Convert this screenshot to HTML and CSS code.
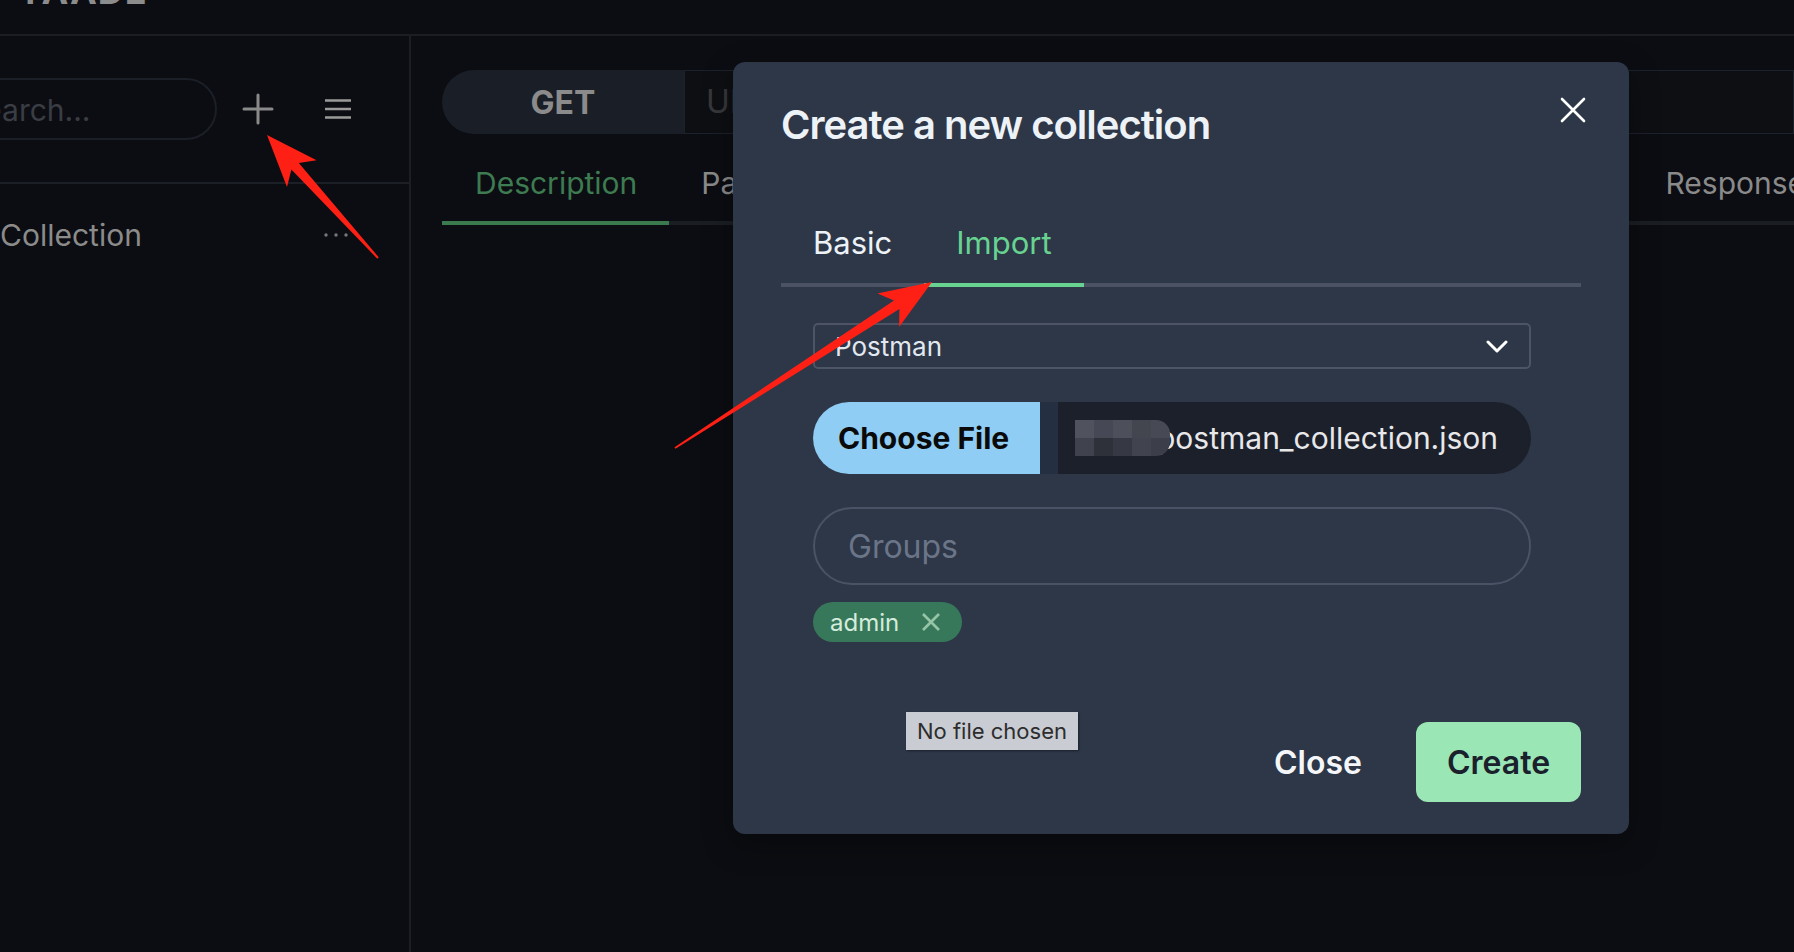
FILE: index.html
```html
<!DOCTYPE html>
<html lang="en">
<head>
    <meta charset="UTF-8">
    <meta name="viewport" content="width=device-width, initial-scale=1.0">
    <title>Yaade</title>
    <link rel="stylesheet" href="styles.css">
</head>
<body>

    <header class="topbar">
        <div class="logo">YAADE</div>
    </header>

    <div class="workspace">
        <aside class="sidebar">
            <div class="sidebar-tools">
                <div class="search">Search...</div>
                <button class="icon-btn plus-btn">
                    <svg width="32" height="32" viewBox="0 0 32 32"><path d="M16 2v28M2 16h28" stroke="currentColor" stroke-width="3" stroke-linecap="round"/></svg>
                </button>
                <button class="icon-btn menu-btn">
                    <svg width="28" height="20" viewBox="0 0 28 20"><path d="M1 1.5h26M1 10h26M1 18.5h26" stroke="currentColor" stroke-width="2.6"/></svg>
                </button>
            </div>
            <div class="collection-item">
                <span class="collection-name">Collection</span>
                <svg class="dots" width="26" height="6" viewBox="0 0 26 6"><circle cx="3" cy="3" r="1.7"/><circle cx="13" cy="3" r="1.7"/><circle cx="23" cy="3" r="1.7"/></svg>
            </div>
        </aside>

        <main class="main">
            <div class="request-bar">
                <div class="method">GET</div>
                <div class="url">URL</div>
            </div>
            <div class="req-tabs">
                <div class="req-tab active">Description</div>
                <div class="req-tab">Parameters</div>
                <div class="req-tab">Headers</div>
                <div class="req-tab">Body</div>
                <div class="req-tab">Auth</div>
                <div class="req-tab">Request Scripts</div>
                <div class="req-tab">Response</div>
            </div>
        </main>
    </div>

    <!-- Create collection dialog -->
    <div class="modal">
        <div class="modal-header">Create a new collection</div>
        <button class="modal-close">
            <svg width="26" height="26" viewBox="0 0 26 26"><path d="M2 2l22 22M24 2L2 24" stroke="currentColor" stroke-width="2.6" stroke-linecap="round"/></svg>
        </button>

        <div class="modal-body">
            <div class="tabs">
                <div class="tab">Basic</div>
                <div class="tab active">Import</div>
            </div>
            <div class="tab-panel">
                <div class="select">
                    <span>Postman</span>
                    <svg width="22" height="13" viewBox="0 0 22 13"><path d="M2 2l9 9 9-9" fill="none" stroke="currentColor" stroke-width="3" stroke-linecap="round" stroke-linejoin="round"/></svg>
                </div>

                <div class="file-input">
                    <div class="file-btn">Choose File</div>
                    <div class="file-smudge"></div>
                    <div class="file-name">
                        <div class="pixelated">
                            <span></span><span></span><span></span><span></span><span></span>
                            <span></span><span></span><span></span><span></span><span></span>
                        </div>
                        <span class="file-text">postman_collection.json</span>
                    </div>
                </div>

                <div class="groups-input">Groups</div>

                <div class="tag">
                    <span>admin</span>
                    <svg width="20" height="20" viewBox="0 0 20 20"><path d="M2 2l16 16M18 2L2 18" stroke="currentColor" stroke-width="2.6"/></svg>
                </div>
            </div>
        </div>

        <div class="modal-footer">
            <button class="btn-ghost">Close</button>
            <button class="btn-create">Create</button>
        </div>
    </div>

    <div class="tooltip">No file chosen</div>

    <!-- red annotation arrows -->
    <svg class="annotations" width="1794" height="952" viewBox="0 0 1794 952">
        <polygon points="267,135 316.6,160.2 298.8,162.9 378.7,257.3 377.3,258.7 291.4,169.6 287,187"/>
        <polygon points="932,282 877.5,293.4 894,300.6 674.5,447.2 675.5,448.8 899.4,309 899.1,327"/>
    </svg>

</body>
</html>
```

FILE: styles.css
```css
/* Yaade, dark theme, import dialog open */
* {
    box-sizing: border-box;
    margin: 0;
    padding: 0;
}

body {
    width: 1794px;
    height: 952px;
    overflow: hidden;
    background: #0c0d12;
    font-family: 'Inter', 'Noto Sans', sans-serif;
    color: #8a8a8a;
    position: relative;
}

button {
    font-family: inherit;
    border: none;
    background: none;
    cursor: pointer;
}

.topbar {
    height: 36px;
    border-bottom: 2px solid #1b1d22;
    padding-left: 17px;
    overflow: hidden;
}

.logo {
    margin-top: -27px;
    font-size: 36px;
    line-height: 36px;
    font-weight: 700;
    letter-spacing: 1px;
    color: #8c8c8c;
}

.workspace {
    display: flex;
    height: 916px;
}

/* sidebar */
.sidebar {
    width: 411px;
    border-right: 2px solid #1c1e24;
    flex-shrink: 0;
}

.sidebar-tools {
    height: 148px;
    border-bottom: 2px solid #1c1f25;
    display: flex;
    align-items: center;
}

.search {
    width: 280px;
    height: 62px;
    margin-left: -63px;
    border: 2px solid #1b1f27;
    border-radius: 31px;
    padding-left: 26px;
    font-size: 30px;
    line-height: 61px;
    color: #3a3d44;
}

.icon-btn {
    width: 48px;
    height: 48px;
    display: flex;
    align-items: center;
    justify-content: center;
    color: #8a8a8a;
}

.plus-btn {
    margin-left: 17px;
}

.menu-btn {
    margin-left: 32px;
    color: #9a9a9a;
}

.collection-item {
    height: 102px;
    display: flex;
    align-items: center;
    justify-content: space-between;
    padding-right: 60px;
}

.collection-name {
    font-size: 30px;
    color: #8b8b8b;
}

.dots {
    fill: #777;
}

/* main area */
.main {
    flex: 1;
    padding-left: 31px;
    overflow: hidden;
}

.request-bar {
    display: flex;
    margin-top: 34px;
    height: 64px;
}

.method {
    width: 242px;
    background: #1a1e26;
    border-radius: 32px 0 0 32px;
    text-align: center;
    font-size: 32px;
    line-height: 66px;
    font-weight: 700;
    color: #8b8b8b;
}

.url {
    flex: 1;
    background: #0d0f13;
    border: 1px solid #1c222c;
    padding-left: 21px;
    font-size: 32px;
    line-height: 62px;
    color: #37383c;
}

.req-tabs {
    display: flex;
    margin-top: 27px;
    border-bottom: 4px solid #1b1e23;
    white-space: nowrap;
}

.req-tab {
    padding: 0 32px 16px;
    font-size: 30px;
    line-height: 44px;
    color: #8a8a8a;
    border-bottom: 4px solid transparent;
    margin-bottom: -4px;
}

.req-tab.active {
    padding-left: 33px;
    color: #3d7b51;
    border-color: #3b7a4f;
}

/* modal */
.modal {
    position: absolute;
    left: 733px;
    top: 62px;
    width: 896px;
    background: #2d3748;
    border-radius: 12px;
    box-shadow: 0 10px 30px rgba(0, 0, 0, 0.35);
    color: #edf2f7;
}

.modal-header {
    padding: 33px 48px 31px;
    font-size: 40px;
    line-height: 60px;
    font-weight: 600;
    letter-spacing: -1px;
}

.modal-close {
    position: absolute;
    top: 16px;
    right: 24px;
    width: 64px;
    height: 64px;
    display: flex;
    align-items: center;
    justify-content: center;
    color: #fff;
}

.modal-body {
    padding: 17px 48px 16px;
}

.tabs {
    display: flex;
    border-bottom: 4px solid #4a5263;
}

.tab {
    padding: 16px 32px;
    font-size: 31px;
    line-height: 48px;
    border-bottom: 4px solid transparent;
    margin-bottom: -4px;
    color: #edf2f7;
}

.tab.active {
    color: #68d391;
    border-color: #68d391;
}

.tab-panel {
    padding: 36px 50px 32px 32px;
}

.select {
    height: 46px;
    border: 2px solid #4c5465;
    border-radius: 5px;
    padding: 0 20px;
    display: flex;
    align-items: center;
    justify-content: space-between;
    font-size: 26px;
    color: #e2e8f0;
}

.select svg {
    color: #fff;
    margin-right: 1px;
}

.file-input {
    margin-top: 33px;
    height: 72px;
    border-radius: 36px;
    overflow: hidden;
    display: flex;
    background: #1c202b;
}

.file-btn {
    width: 227px;
    background: #90cdf4;
    padding-left: 25px;
    font-size: 30px;
    font-weight: 700;
    line-height: 72px;
    color: #0a0a0a;
    white-space: nowrap;
    overflow: hidden;
}

.file-smudge {
    width: 18px;
    background: #243042;
}

.file-name {
    flex: 1;
    display: flex;
    align-items: center;
    padding-left: 17px;
    font-size: 30px;
    color: #e8e8ea;
    white-space: nowrap;
}

.pixelated {
    display: grid;
    grid-template-columns: repeat(5, 19px);
    grid-template-rows: 18px 18px;
    border-radius: 0 14px 14px 0;
    overflow: hidden;
    margin-right: -13px;
    position: relative;
}

.pixelated span:nth-child(1) { background: #50535e; }
.pixelated span:nth-child(2) { background: #464955; }
.pixelated span:nth-child(3) { background: #4d505b; }
.pixelated span:nth-child(4) { background: #43464f; }
.pixelated span:nth-child(5) { background: #474a55; }
.pixelated span:nth-child(6) { background: #40434d; }
.pixelated span:nth-child(7) { background: #2e313a; }
.pixelated span:nth-child(8) { background: #363943; }
.pixelated span:nth-child(9) { background: #41444e; }
.pixelated span:nth-child(10) { background: #3c3f49; }

.groups-input {
    margin-top: 33px;
    height: 78px;
    border: 2px solid #4a5366;
    border-radius: 39px;
    padding-left: 33px;
    font-size: 32px;
    line-height: 76px;
    color: #6b7588;
}

.tag {
    margin-top: 17px;
    display: inline-flex;
    align-items: center;
    height: 40px;
    padding: 0 21px 0 17px;
    border-radius: 20px;
    background: #38785a;
    font-size: 24px;
    color: #d4ecdd;
}

.tag svg {
    margin-left: 22px;
    color: #95c4a7;
}

.modal-footer {
    padding: 32px 48px;
    display: flex;
    justify-content: flex-end;
    align-items: center;
}

.btn-ghost {
    width: 148px;
    height: 80px;
    margin-right: 24px;
    font-size: 32px;
    font-weight: 600;
    color: #f4f6f9;
}

.btn-create {
    width: 165px;
    height: 80px;
    border-radius: 12px;
    background: #9ae6b4;
    font-size: 32px;
    font-weight: 600;
    color: #1a202c;
}

/* native tooltip of the file input */
.tooltip {
    position: absolute;
    left: 906px;
    top: 712px;
    height: 38px;
    padding: 0 11px;
    background: #c9ccd2;
    font-size: 22px;
    line-height: 38px;
    color: #2d2d2d;
    box-shadow: 1px 1px 2px rgba(0, 0, 0, 0.4);
}

.annotations {
    position: absolute;
    left: 0;
    top: 0;
    pointer-events: none;
    fill: #fe2015;
}
```
